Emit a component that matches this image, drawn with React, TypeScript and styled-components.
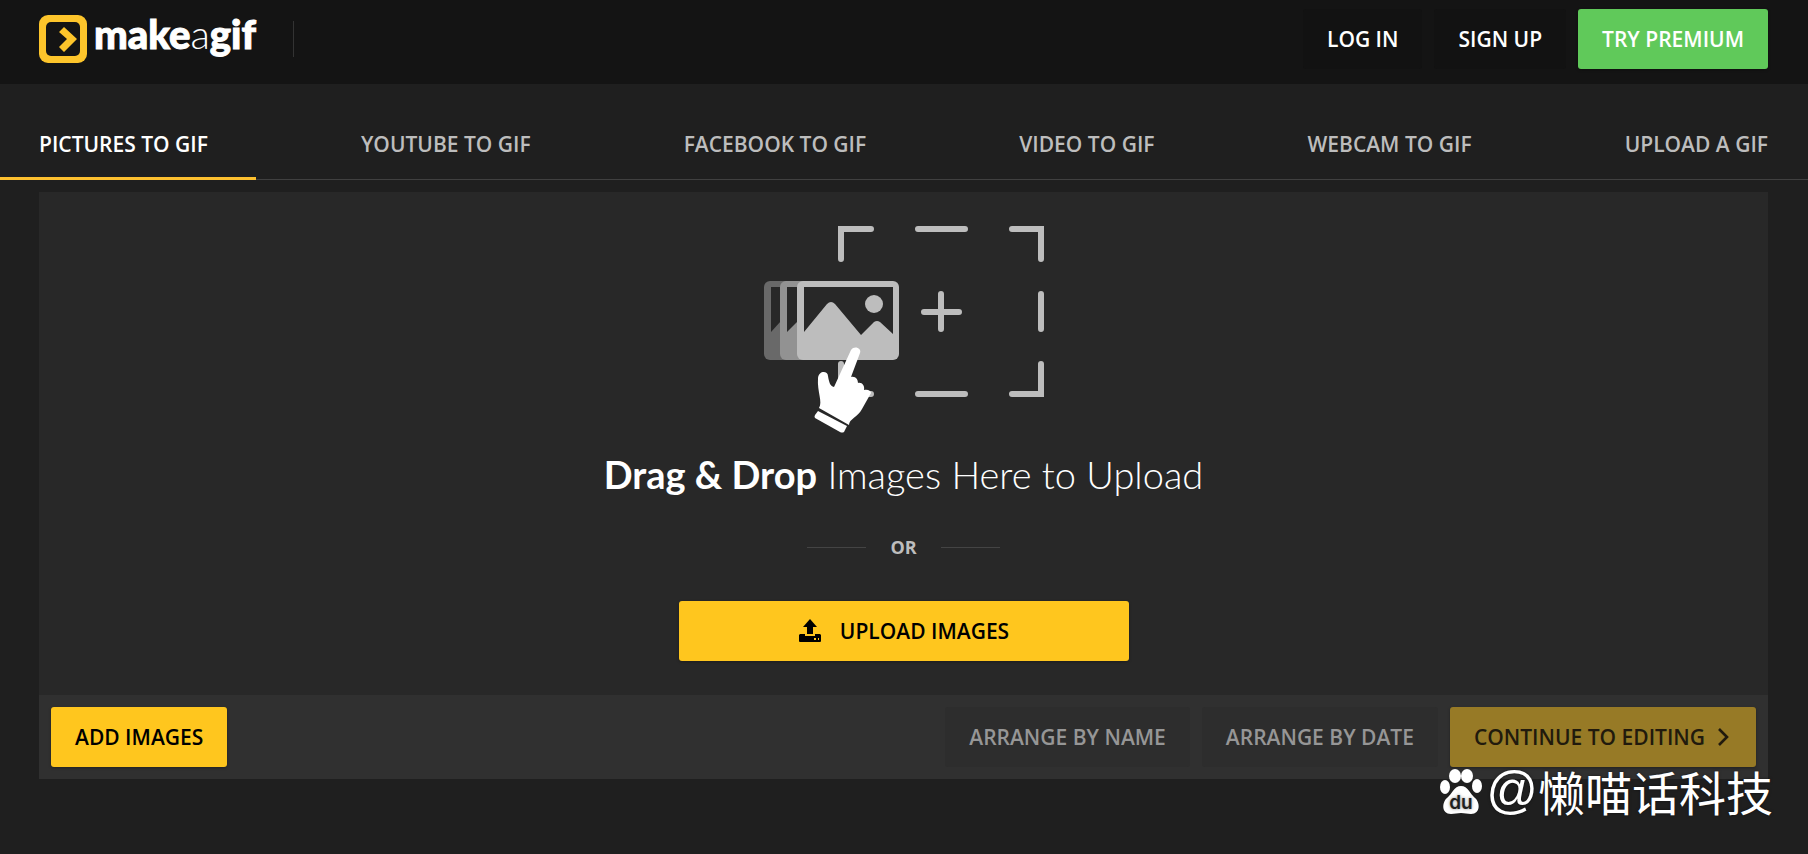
import React from "react";
import styled, { createGlobalStyle, css } from "styled-components";

const GlobalStyle = createGlobalStyle`
  *, *::before, *::after { box-sizing: border-box; }
  html, body, #root { min-height: 100vh; }
  body {
    margin: 0;
    background: #1f1f1f;
    color: #fff;
    font-family: "Open Sans", "Noto Sans", sans-serif;
  }
`;

const Page = styled.div`
  position: relative;
  min-height: 100vh;
`;

const Header = styled.header`
  display: flex;
  align-items: flex-start;
  justify-content: space-between;
  height: 84px;
  padding: 9px 40px 15px 39px;
  background: #141414;
`;

const Brand = styled.div`
  display: flex;
  align-items: center;
  gap: 37px;
  height: 60px;
`;

const LogoLink = styled.a`
  display: flex;
  align-items: center;
  gap: 7px;
  color: #fff;
  text-decoration: none;
`;

const Wordmark = styled.span`
  padding-bottom: 10px;
  font: 900 40px/48px Lato, sans-serif;
  -webkit-text-stroke: 1px #fff;
`;

const ThinLetter = styled.span`
  font-weight: 300;
  -webkit-text-stroke: 0;
`;

const Divider = styled.span`
  width: 1px;
  height: 36px;
  background: #333;
`;

const Actions = styled.div`
  display: flex;
  gap: 12px;
`;

type Tone = "dark" | "green" | "yellow" | "muted";

const tones = {
  dark: css`background: #121212; color: #fff; box-shadow: none;`,
  green: css`background: #60c95a; color: #fff;`,
  yellow: css`background: #ffc61e; color: #000;`,
  muted: css`background: #2d2d2d; color: #969696; box-shadow: none;`,
};

const Button = styled.button<{ $tone: Tone; $wide?: boolean }>`
  display: flex;
  align-items: center;
  justify-content: center;
  gap: 18px;
  width: ${(p) => (p.$wide ? "450px" : "auto")};
  height: 60px;
  padding: 0 24px;
  border: 0;
  border-radius: 3px;
  box-shadow: 0 1px 3px rgba(0, 0, 0, 0.3);
  font: 600 21px/30px "Open Sans", sans-serif;
  white-space: nowrap;
  cursor: pointer;
  ${(p) => tones[p.$tone]}
`;

const ContinueButton = styled(Button)`
  gap: 12px;
  background: #977a26;
  color: #211a0d;
`;

const Tabs = styled.nav`
  display: flex;
  justify-content: space-between;
  height: 96px;
  padding: 0 40px 0 39px;
  border-bottom: 1px solid #404040;
`;

const Tab = styled.a<{ $active?: boolean }>`
  position: relative;
  padding-top: 45px;
  color: ${(p) => (p.$active ? "#fff" : "#bdbdbd")};
  font-size: 21px;
  line-height: 30px;
  font-weight: 600;
  text-decoration: none;
  white-space: nowrap;
  ${(p) => p.$active && css`
    &::after {
      content: "";
      position: absolute;
      left: -39px;
      right: -48px;
      bottom: -1px;
      height: 3px;
      background: #fdc02f;
    }
  `}
`;

const Panel = styled.main`
  margin: 12px 40px 0 39px;
  background: #282828;
`;

const DropZone = styled.section`
  display: flex;
  flex-direction: column;
  align-items: center;
  padding: 33px 0 34px;
`;

const Title = styled.h1`
  margin: 15px 0 0;
  font: 300 38px/48px Lato, sans-serif;
`;

const Strong = styled.strong`
  font-weight: 700;
`;

const Or = styled.div`
  display: flex;
  align-items: center;
  gap: 24px;
  margin: 34px 0 39px;
  color: #bdbdbd;
  font-size: 18px;
  line-height: 30px;
  font-weight: 700;
  &::before, &::after {
    content: "";
    width: 59px;
    height: 1px;
    background: #444;
  }
`;

const Toolbar = styled.footer`
  display: flex;
  justify-content: space-between;
  padding: 12px;
  background: #303030;
`;

const Watermark = styled.div`
  position: absolute;
  right: 35px;
  bottom: 38px;
  display: flex;
  align-items: flex-start;
  font: 400 47px/46px "Noto Sans CJK SC", sans-serif;
  text-shadow: 0 0 3px rgba(0, 0, 0, 0.5);
`;

const AtSign = styled.span`
  margin-left: 3px;
  font-family: "Liberation Sans", sans-serif;
  font-size: 51px;
`;

const LogoMark = () => (
  <svg width="48" height="48" viewBox="0 0 48 48" aria-hidden="true">
    <rect width="48" height="48" rx="9" fill="#fdc52b" />
    <rect x="7" y="7" width="34" height="34" rx="5" fill="#141414" />
    <path d="M20 17l5-5 13 12-13 13-5-5 8-8z" fill="#fdc52b" />
  </svg>
);

const DragIllustration = () => (
  <svg width="282" height="210" viewBox="763 225 282 210" aria-hidden="true">
    <g fill="none" stroke="#bdbdbd" strokeWidth="6" strokeLinecap="round">
      <path d="M841 259V229H871M918 229h47M1012 229h29v30M1041 294v35M1041 364v30h-29M965 394h-47M871 394h-30v-30M924 312h35M941 294v35" />
    </g>
    <rect x="764" y="281" width="60" height="79" rx="6" fill="#696969" />
    <path d="M771 287h10v34l-10 11z" fill="#282828" />
    <rect x="780" y="281" width="60" height="79" rx="6" fill="#929292" />
    <path d="M787 287h11v34l-11 11z" fill="#282828" />
    <rect x="797" y="281" width="102" height="79" rx="6" fill="#bdbdbd" />
    <path d="M804 287h89v47l-13-12q-3-2-6 0l-13 13-26-31q-4-4-8 0l-23 28z" fill="#282828" />
    <circle cx="874" cy="304" r="9" fill="#bdbdbd" />
    <path d="M851 350C854 345 862 348 860 353L851 377C856 376 858 380 858 383C862 382 865 386 864 390C868 389 871 391 871 393L862 409C858 417 849 419 849 425L819 408C823 402 817 392 818 378C819 370 828 371 828 376C829 382 830 386 834 387Z" fill="#fff" />
    <path d="M818 411l29 15-3 6q-2 1-4 0l-25-14q-1-1 0-3z" fill="#fff" />
  </svg>
);

const UploadIcon = () => (
  <svg width="24" height="24" viewBox="0 0 24 24" aria-hidden="true">
    <path d="M12 0l7 8h-4v7h-6V8H5z" />
    <path fillRule="evenodd" d="M2 15h5v2h10v-2h5l1 1v6q0 1-1 1H2q-1 0-1-1v-6zM16 19v2h2v-2zM20 19v2h1v-2z" />
  </svg>
);

const ChevronIcon = () => (
  <svg width="15" height="18" viewBox="0 0 15 18" fill="none" stroke="currentColor" strokeWidth="2.6" aria-hidden="true">
    <path d="M2 1l8 8-8 8" />
  </svg>
);

const PawLogo = () => (
  <svg width="44" height="48" viewBox="0 0 44 48" fill="#fff" role="img" aria-label="du">
    <ellipse cx="16" cy="8" rx="6" ry="7" />
    <ellipse cx="28" cy="8" rx="6" ry="7" />
    <ellipse cx="6" cy="19" rx="5" ry="7" />
    <ellipse cx="38" cy="18" rx="5" ry="7" />
    <path d="M22 18c7 0 9 8 14 12s6 16-4 16c-4 0-6-1-10-1s-6 1-10 1c-10 0-9-12-4-16S15 18 22 18z" />
    <text x="22" y="41" fill="#1f1f1f" textAnchor="middle" fontFamily="Inter, sans-serif" fontSize="19" fontWeight="600">du</text>
  </svg>
);

const tabs = ["PICTURES TO GIF", "YOUTUBE TO GIF", "FACEBOOK TO GIF", "VIDEO TO GIF", "WEBCAM TO GIF", "UPLOAD A GIF"];

export default function App() {
  return (
    <Page>
      <GlobalStyle />
      <Header>
        <Brand>
          <LogoLink href="#">
            <LogoMark />
            <Wordmark>make<ThinLetter>a</ThinLetter>gif</Wordmark>
          </LogoLink>
          <Divider />
        </Brand>
        <Actions>
          <Button $tone="dark">LOG IN</Button>
          <Button $tone="dark">SIGN UP</Button>
          <Button $tone="green">TRY PREMIUM</Button>
        </Actions>
      </Header>
      <Tabs>
        {tabs.map((label, i) => (
          <Tab key={label} href="#" $active={i === 0}>{label}</Tab>
        ))}
      </Tabs>
      <Panel>
        <DropZone>
          <DragIllustration />
          <Title><Strong>Drag &amp; Drop</Strong> Images Here to Upload</Title>
          <Or>OR</Or>
          <Button $tone="yellow" $wide><UploadIcon />UPLOAD IMAGES</Button>
        </DropZone>
        <Toolbar>
          <Button $tone="yellow">ADD IMAGES</Button>
          <Actions>
            <Button $tone="muted">ARRANGE BY NAME</Button>
            <Button $tone="muted">ARRANGE BY DATE</Button>
            <ContinueButton $tone="yellow">CONTINUE TO EDITING<ChevronIcon /></ContinueButton>
          </Actions>
        </Toolbar>
      </Panel>
      <Watermark>
        <PawLogo />
        <AtSign>@</AtSign>
        <span>懒喵话科技</span>
      </Watermark>
    </Page>
  );
}
